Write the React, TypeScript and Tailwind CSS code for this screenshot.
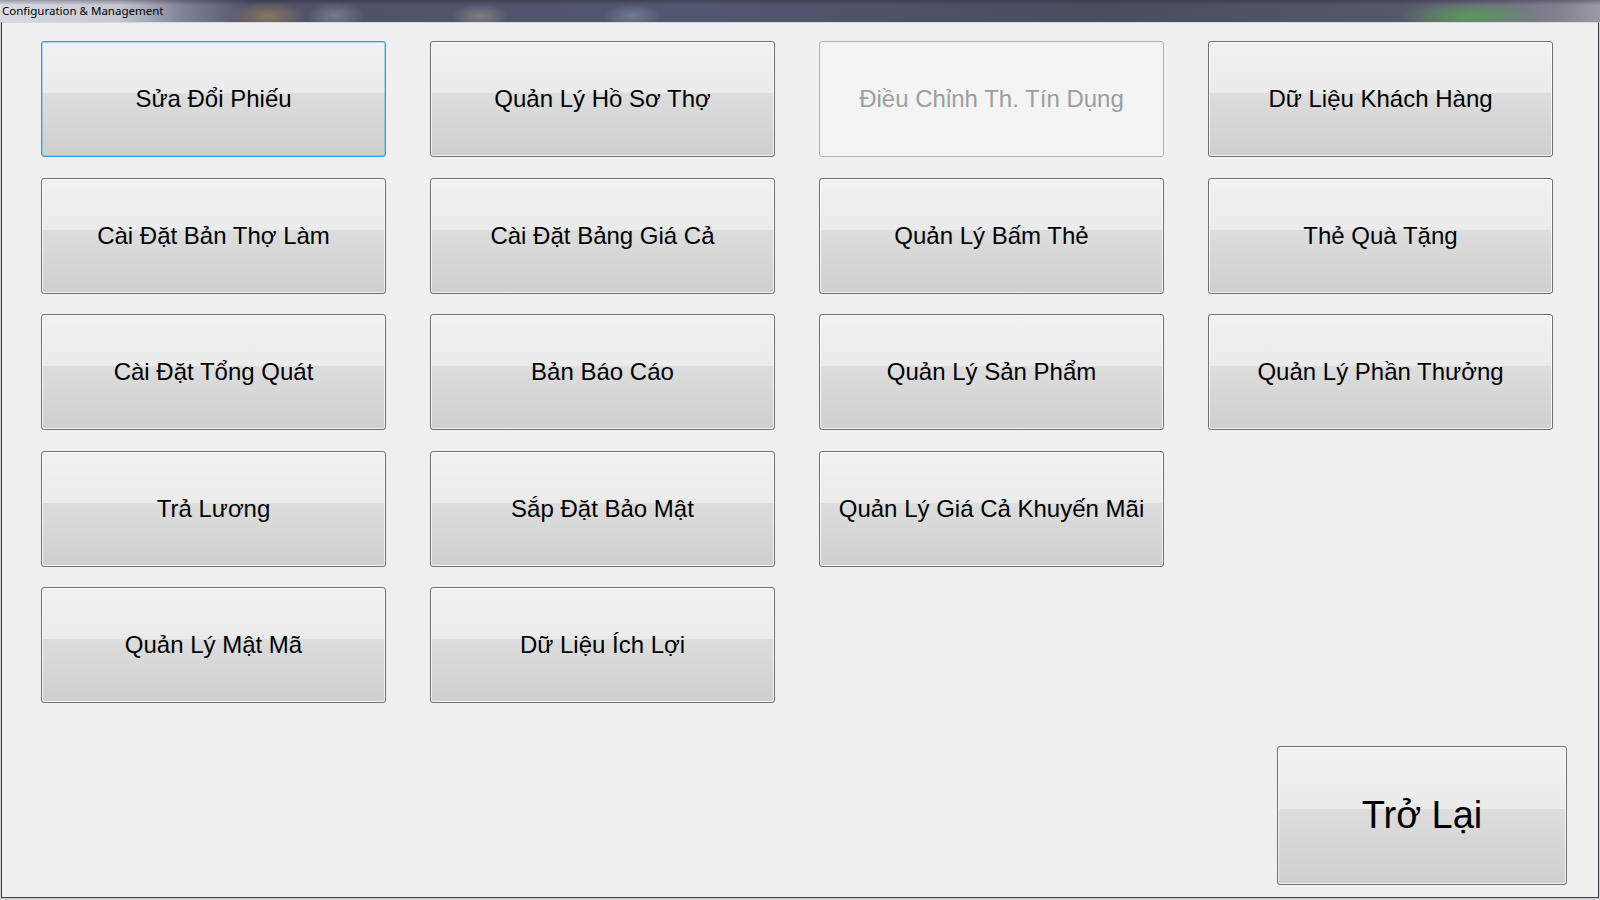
import React from "react";

type Kind = "normal" | "focus" | "disabled";

const buttons: ({ label: string; kind?: Kind } | null)[] = [
  { label: "Sửa Đổi Phiếu", kind: "focus" },
  { label: "Quản Lý Hồ Sơ Thợ" },
  { label: "Điều Chỉnh Th. Tín Dụng", kind: "disabled" },
  { label: "Dữ Liệu Khách Hàng" },
  { label: "Cài Đặt Bản Thợ Làm" },
  { label: "Cài Đặt Bảng Giá Cả" },
  { label: "Quản Lý Bấm Thẻ" },
  { label: "Thẻ Quà Tặng" },
  { label: "Cài Đặt Tổng Quát" },
  { label: "Bản Báo Cáo" },
  { label: "Quản Lý Sản Phẩm" },
  { label: "Quản Lý Phần Thưởng" },
  { label: "Trả Lương" },
  { label: "Sắp Đặt Bảo Mật" },
  { label: "Quản Lý Giá Cả Khuyến Mãi" },
  null,
  { label: "Quản Lý Mật Mã" },
  { label: "Dữ Liệu Ích Lợi" },
];

const base =
  "flex items-center justify-center rounded-[3px] border whitespace-nowrap";
// classic Win7 two-tone gradient
const glossy =
  "bg-[linear-gradient(to_bottom,#f2f2f2_0%,#ebebeb_45%,#dddddd_45%,#cfcfcf_100%)] text-black";

const WinButton: React.FC<{ label: string; kind?: Kind }> = ({ label, kind = "normal" }) => {
  if (kind === "disabled") {
    return (
      <button className={`${base} border-[#adb2b5] bg-[#f4f4f4] text-[#9d9d9d]`}>{label}</button>
    );
  }
  if (kind === "focus") {
    return (
      <button
        className={`${base} ${glossy} border-[#2a9fdb] shadow-[inset_0_0_0_1px_rgba(80,180,235,0.45)]`}
      >
        {label}
      </button>
    );
  }
  return (
    <button
      className={`${base} ${glossy} border-[#707070] shadow-[inset_0_0_0_1px_rgba(255,255,255,0.75)]`}
    >
      {label}
    </button>
  );
};

export default function App() {
  return (
    <div className="w-[1600px] h-[900px] flex flex-col bg-[#cfd0d6] font-['Liberation_Sans',Arial,sans-serif] overflow-hidden">
      {/* Aero glass title bar */}
      <div className="h-[22px] shrink-0 flex items-center px-[2px] bg-[linear-gradient(to_bottom,rgba(30,30,45,0.35)_0px,transparent_5px),radial-gradient(ellipse_40px_14px_at_268px_16px,rgba(190,150,90,0.55),transparent),radial-gradient(ellipse_30px_14px_at_335px_16px,rgba(200,200,205,0.35),transparent),radial-gradient(ellipse_30px_12px_at_480px_16px,rgba(200,190,150,0.4),transparent),radial-gradient(ellipse_30px_12px_at_632px_16px,rgba(160,200,210,0.35),transparent),radial-gradient(ellipse_70px_14px_at_1470px_16px,rgba(90,170,80,0.75),transparent),linear-gradient(to_right,#d9dbe3_0px,#c4c6d1_120px,#7d8096_185px,#4e5167_250px,#535670_700px,#4a4c60_1100px,#55586b_1400px,#808290_1560px,#9a9ba4_1600px)]">
        <span className="font-['Noto_Sans',sans-serif] text-[11.5px] leading-none text-black">
          Configuration &amp; Management
        </span>
      </div>

      {/* window client area */}
      <div className="flex-1 ml-px mr-px mb-[2px] flex flex-col border border-[#3c3c44] border-t-[#d8d8dc] bg-[#f0f0f0] pl-[39px] pt-[18px]">
        <div className="grid grid-cols-[repeat(4,345px)] auto-rows-[116px] gap-x-[44px] gap-y-[20.5px] text-[24px]">
          {buttons.map((b, i) =>
            b ? <WinButton key={i} label={b.label} kind={b.kind} /> : <div key={i} />
          )}
        </div>

        <button
          className={`${base} ${glossy} border-[#707070] shadow-[inset_0_0_0_1px_rgba(255,255,255,0.75)] mt-auto ml-auto mr-[31px] mb-[12px] w-[290px] h-[139px] text-[38px]`}
        >
          Trở Lại
        </button>
      </div>
    </div>
  );
}
